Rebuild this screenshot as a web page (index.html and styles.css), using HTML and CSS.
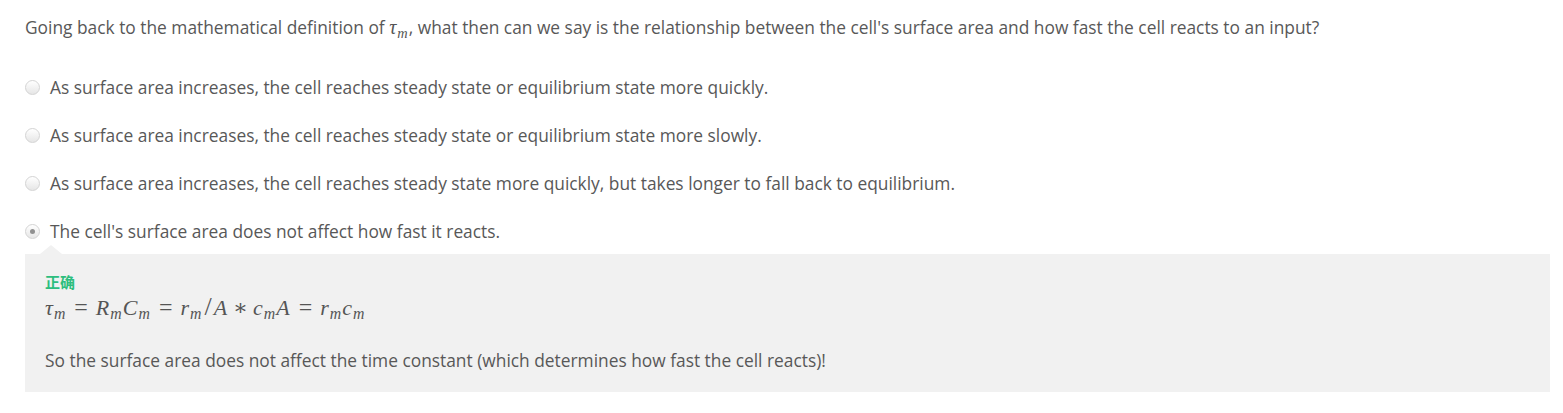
FILE: index.html
```html
<!DOCTYPE html>
<html>
<head>
<meta charset="utf-8">
<link rel="stylesheet" href="styles.css">
</head>
<body>
<div class="quiz">
  <p class="question">Going back to the mathematical definition of <span class="math inline"><i>τ</i><sub><i>m</i></sub></span>, what then can we say is the relationship between the cell's surface area and how fast the cell reacts to an input?</p>
  <ul class="options">
    <li class="option"><span class="radio"></span><span>As surface area increases, the cell reaches steady state or equilibrium state more quickly.</span></li>
    <li class="option"><span class="radio"></span><span>As surface area increases, the cell reaches steady state or equilibrium state more slowly.</span></li>
    <li class="option"><span class="radio"></span><span>As surface area increases, the cell reaches steady state more quickly, but takes longer to fall back to equilibrium.</span></li>
    <li class="option"><span class="radio checked"></span><span>The cell's surface area does not affect how fast it reacts.</span></li>
  </ul>
  <div class="feedback">
    <div class="verdict">正确</div>
    <div class="formula math"><i>τ</i><sub><i>m</i></sub><span class="rel">=</span><i>R</i><sub><i>m</i></sub><i>C</i><sub><i>m</i></sub><span class="rel">=</span><i>r</i><sub><i>m</i></sub><span class="ord">/</span><i>A</i><span class="bin">∗</span><i>c</i><sub><i>m</i></sub><i>A</i><span class="rel">=</span><i>r</i><sub><i>m</i></sub><i>c</i><sub><i>m</i></sub></div>
    <p class="explain">So the surface area does not affect the time constant (which determines how fast the cell reacts)!</p>
  </div>
</div>
</body>
</html>
```

FILE: styles.css
```css
html, body {
  margin: 0;
  padding: 0;
  background: #fff;
}
body {
  font-family: "Open Sans", "Noto Sans CJK SC", sans-serif;
  color: #585858;
  font-size: 17.35px;
}
.quiz {
  padding: 14px 13px 0 25px;
}
.question {
  margin: 0;
  line-height: 26px;
}
.math {
  font-family: "Liberation Serif", "DejaVu Serif", serif;
  color: #555;
}
.math i {
  padding-right: 1px;
}
.math.inline {
  font-size: 20px;
}
.math sub {
  font-size: 72%;
  vertical-align: -4px;
  line-height: 0;
}
.math .rel {
  margin: 0 8px;
  font-size: 24px;
  line-height: 0;
}
.math .bin {
  margin: 0 5px;
}
.math .ord {
  font-size: 26px;
  line-height: 0;
  margin: 0 2px;
}
.options {
  list-style: none;
  margin: 34px 0 0 0;
  padding: 0;
  display: flex;
  flex-direction: column;
  gap: 22px;
}
.option {
  display: flex;
  align-items: center;
  gap: 10px;
  line-height: 26px;
}
.radio {
  width: 13px;
  height: 13px;
  border-radius: 50%;
  border: 1px solid #d4d4d4;
  background: linear-gradient(#fff, #e6e6e6);
  flex: none;
  position: relative;
  box-sizing: content-box;
}
.radio.checked::after {
  content: "";
  position: absolute;
  left: 4px;
  top: 4px;
  width: 5px;
  height: 5px;
  border-radius: 50%;
  background: #909090;
}
.feedback {
  position: relative;
  margin-top: 10px;
  background: #f1f1f1;
  padding: 18px 20px 19px 20px;
}
.feedback::before {
  content: "";
  position: absolute;
  left: 15px;
  top: -9px;
  border-left: 11px solid transparent;
  border-right: 11px solid transparent;
  border-bottom: 9px solid #f1f1f1;
}
.verdict {
  color: #2dbe7e;
  font-weight: bold;
  font-size: 15px;
  line-height: 20px;
}
.formula {
  font-size: 22px;
  line-height: 32px;
}
.explain {
  margin: 23px 0 0 0;
  line-height: 26px;
}
```
